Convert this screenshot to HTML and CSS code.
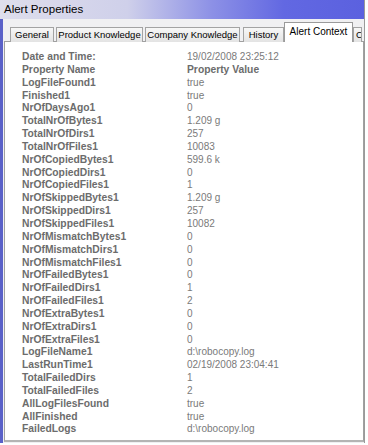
FILE: index.html
```html
<!DOCTYPE html>
<html lang="en">
<head>
    <meta charset="UTF-8">
    <title>Alert Properties</title>
    <link rel="stylesheet" href="styles.css">
</head>
<body>
    <div class="window">
        <div class="titlebar">Alert Properties</div>
        <div class="dialog">
            <div class="tabs">
                <div class="tab tab-general">General</div>
                <div class="tab tab-product">Product Knowledge</div>
                <div class="tab tab-company">Company Knowledge</div>
                <div class="tab tab-history">History</div>
                <div class="tab active">Alert Context</div>
                <div class="tab cut">C</div>
            </div>
            <div class="panel">
                <div class="props">
                    <div class="name">Date and Time:</div><div class="value">19/02/2008 23:25:12</div>
                    <div class="name">Property Name</div><div class="value head">Property Value</div>
                    <div class="name">LogFileFound1</div><div class="value">true</div>
                    <div class="name">Finished1</div><div class="value">true</div>
                    <div class="name">NrOfDaysAgo1</div><div class="value">0</div>
                    <div class="name">TotalNrOfBytes1</div><div class="value">1.209 g</div>
                    <div class="name">TotalNrOfDirs1</div><div class="value">257</div>
                    <div class="name">TotalNrOfFiles1</div><div class="value">10083</div>
                    <div class="name">NrOfCopiedBytes1</div><div class="value">599.6 k</div>
                    <div class="name">NrOfCopiedDirs1</div><div class="value">0</div>
                    <div class="name">NrOfCopiedFiles1</div><div class="value">1</div>
                    <div class="name">NrOfSkippedBytes1</div><div class="value">1.209 g</div>
                    <div class="name">NrOfSkippedDirs1</div><div class="value">257</div>
                    <div class="name">NrOfSkippedFiles1</div><div class="value">10082</div>
                    <div class="name">NrOfMismatchBytes1</div><div class="value">0</div>
                    <div class="name">NrOfMismatchDirs1</div><div class="value">0</div>
                    <div class="name">NrOfMismatchFiles1</div><div class="value">0</div>
                    <div class="name">NrOfFailedBytes1</div><div class="value">0</div>
                    <div class="name">NrOfFailedDirs1</div><div class="value">1</div>
                    <div class="name">NrOfFailedFiles1</div><div class="value">2</div>
                    <div class="name">NrOfExtraBytes1</div><div class="value">0</div>
                    <div class="name">NrOfExtraDirs1</div><div class="value">0</div>
                    <div class="name">NrOfExtraFiles1</div><div class="value">0</div>
                    <div class="name">LogFileName1</div><div class="value">d:\robocopy.log</div>
                    <div class="name">LastRunTime1</div><div class="value">02/19/2008 23:04:41</div>
                    <div class="name">TotalFailedDirs</div><div class="value">1</div>
                    <div class="name">TotalFailedFiles</div><div class="value">2</div>
                    <div class="name">AllLogFilesFound</div><div class="value">true</div>
                    <div class="name">AllFinished</div><div class="value">true</div>
                    <div class="name">FailedLogs</div><div class="value">d:\robocopy.log</div>
                </div>
            </div>
        </div>
    </div>
</body>
</html>
```

FILE: styles.css
```css
/* Alert Properties dialog */
body {
    margin: 0;
    background-color: #fff;
    font-family: "Liberation Sans", Arial, sans-serif;
}

.window {
    width: 365px;
    height: 443px;
    display: flex;
    flex-direction: column;
    box-sizing: border-box;
    border-right: 1px solid #9a9a9a;
}

.titlebar {
    height: 19px;
    line-height: 19px;
    padding-left: 4px;
    font-size: 11.5px;
    color: #000;
    background: linear-gradient(to right, #dedeec 0%, #cfd0ea 35%, #8d91e6 58%, #6268e2 78%, #5b61df 100%);
}

.dialog {
    flex: 1;
    display: flex;
    flex-direction: column;
    background-color: #f0f0f2;
    border-left: 3px solid #5a61c8;
    padding: 4px 0 1px 1px;
}

/* Onglets */
.tabs {
    display: flex;
    align-items: flex-end;
    padding-left: 6px;
    height: 19px;
    position: relative;
    z-index: 1;
}

.tab {
    box-sizing: border-box;
    height: 15px;
    line-height: 14px;
    text-align: center;
    margin-right: 2px;
    font-size: 9.5px;
    color: #000;
    border: 1px solid #a3a3a3;
    border-bottom: none;
    background: linear-gradient(#f7f7f7, #e3e3e3);
    white-space: nowrap;
    overflow: hidden;
}

.tab-general { width: 44px; }
.tab-product { width: 87px; }
.tab-company { width: 95px; margin-right: 3px; }
.tab-history { width: 41px; margin-right: 0; }

.tab.active {
    width: 69px;
    height: 20px;
    line-height: 17px;
    font-size: 10px;
    background: #fff;
    margin-right: 0;
    border-color: #9a9a9a;
}

.tab.cut {
    width: 9px;
    text-align: left;
    padding-left: 2px;
    margin-right: 0;
}

/* Panneau */
.panel {
    flex: 1;
    background-color: #fff;
    border: 1px solid #a0a0a0;
    border-bottom: 2px solid #b4b4b4;
    margin-top: -1px;
    padding: 9px 0 0 17px;
}

.props {
    display: grid;
    grid-template-columns: 165px 1fr;
    font-size: 10.3px;
    line-height: 12.85px;
}

.name {
    font-weight: bold;
    color: #6c6c6c;
}

.value {
    font-size: 10px;
    color: #7a7a7a;
}

.value.head {
    font-size: 10.3px;
    font-weight: bold;
    color: #6c6c6c;
}
```
